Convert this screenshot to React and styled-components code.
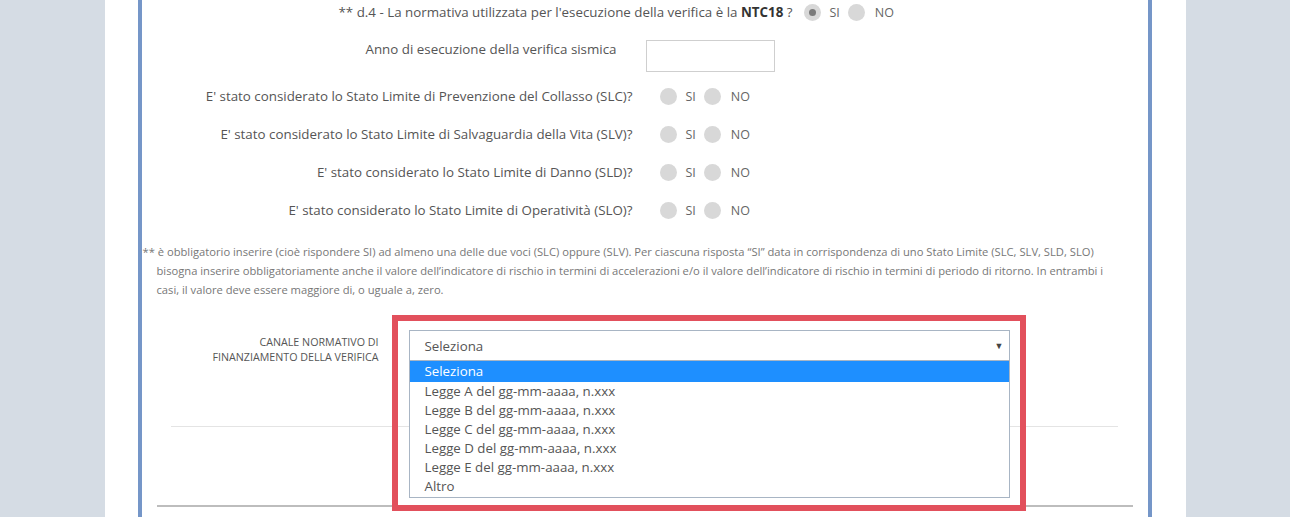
import React from "react";
import styled, { createGlobalStyle } from "styled-components";

const GlobalStyle = createGlobalStyle`
  html, body { margin: 0; padding: 0; }
  body {
    background: #d5dce4;
    font-family: "Open Sans", "Noto Sans", sans-serif;
    color: #555;
  }
`;

const Column = styled.div`
  width: 1081px;
  margin: 0 auto;
  background: #fff;
  padding: 0 34px 0 33px;
  box-sizing: border-box;
  height: 517px;
  overflow: hidden;
`;

const Panel = styled.section`
  border-left: 4px solid #7596c8;
  border-right: 4px solid #7596c8;
  height: 100%;
`;

const Row = styled.div`
  display: grid;
  grid-template-columns: ${(p) => p.$label}px 1fr;
  column-gap: ${(p) => p.$gap}px;
  align-items: ${(p) => p.$align || "center"};
  height: ${(p) => p.$h}px;
  margin-top: ${(p) => p.$mt || 0}px;
`;

const Label = styled.div`
  text-align: right;
  font-size: 13.35px;
  line-height: 18px;
  color: #555;
  white-space: nowrap;

  b {
    font-weight: 700;
    color: #333;
  }
`;

const SmallLabel = styled.div`
  text-align: right;
  font-size: 10.7px;
  line-height: 15px;
  padding-top: 5px;
  text-transform: uppercase;
  color: #555;
`;

const RadioGroup = styled.div`
  display: flex;
  align-items: center;
`;

const Radio = styled.span`
  position: relative;
  width: 17px;
  height: 17px;
  border-radius: 50%;
  background: #d8d8d8;
  flex: none;

  &::after {
    content: "";
    display: ${(p) => (p.$checked ? "block" : "none")};
    position: absolute;
    left: 5px;
    top: 5px;
    width: 7px;
    height: 7px;
    border-radius: 50%;
    background: #7a7a7a;
  }
`;

const Choice = styled.span`
  font-size: 12.5px;
  color: #666;
  margin: 0 ${(p) => p.$after}px 0 ${(p) => p.$before}px;
`;

const TextInput = styled.input`
  width: 129px;
  height: 32px;
  box-sizing: border-box;
  border: 1px solid #cfcfcf;
  background: #fff;
  margin: 0;
`;

const Note = styled.p`
  margin: 13px 0 0;
  padding: 0 26px 0 15px;
  text-indent: -14px;
  font-size: 11.2px;
  line-height: 19px;
  color: #777;
`;

const Field = styled.div`
  position: relative;
  width: 601px;
`;

const Select = styled.div`
  height: 31px;
  box-sizing: border-box;
  border: 1px solid #a8b5c4;
  display: flex;
  align-items: center;
  justify-content: space-between;
  padding: 0 5px 0 15px;
  font-size: 13.3px;
  color: #555;
  background: #fff;
`;

const Caret = styled.span`
  font-size: 9px;
  color: #444;
`;

const Options = styled.ul`
  position: absolute;
  top: 100%;
  left: 0;
  right: 0;
  margin: 0;
  padding: 0 0 1px;
  list-style: none;
  border: 1px solid #a8b5c4;
  border-top: none;
  background: #fff;
  z-index: 2;
`;

const Option = styled.li`
  height: ${(p) => (p.$active ? 21 : 19)}px;
  line-height: ${(p) => (p.$active ? 21 : 19)}px;
  padding-left: 15px;
  font-size: 13.3px;
  color: ${(p) => (p.$active ? "#fff" : "#555")};
  background: ${(p) => (p.$active ? "#1e8fff" : "transparent")};
`;

const Highlight = styled.div`
  position: absolute;
  top: -15px;
  left: -17px;
  width: 634px;
  height: 196px;
  box-sizing: border-box;
  border: 6px solid #e2505c;
  pointer-events: none;
  z-index: 3;
`;

const Rule = styled.hr`
  border: none;
  border-top: ${(p) => p.$weight}px solid ${(p) => p.$color};
  margin: ${(p) => p.$mt}px ${(p) => p.$right}px 0 ${(p) => p.$left}px;
`;

const YesNo = ({ checked }) => (
  <RadioGroup>
    <Radio $checked={checked === "si"} />
    <Choice $before={9} $after={8}>SI</Choice>
    <Radio $checked={checked === "no"} />
    <Choice $before={10} $after={0}>NO</Choice>
  </RadioGroup>
);

const limits = [
  "E' stato considerato lo Stato Limite di Prevenzione del Collasso (SLC)?",
  "E' stato considerato lo Stato Limite di Salvaguardia della Vita (SLV)?",
  "E' stato considerato lo Stato Limite di Danno (SLD)?",
  "E' stato considerato lo Stato Limite di Operatività (SLO)?",
];

const options = [
  "Seleziona",
  "Legge A del gg-mm-aaaa, n.xxx",
  "Legge B del gg-mm-aaaa, n.xxx",
  "Legge C del gg-mm-aaaa, n.xxx",
  "Legge D del gg-mm-aaaa, n.xxx",
  "Legge E del gg-mm-aaaa, n.xxx",
  "Altro",
];

export default function App() {
  return (
    <>
      <GlobalStyle />
      <Column>
        <Panel>
          <Row $label={651} $gap={11} $h={24}>
            <Label>
              ** d.4 - La normativa utilizzata per l'esecuzione della verifica è la <b>NTC18</b> ?
            </Label>
            <YesNo checked="si" />
          </Row>

          <Row $label={475} $gap={29} $h={32} $mt={16} $align="start">
            <Label>Anno di esecuzione della verifica sismica</Label>
            <TextInput type="text" />
          </Row>

          {limits.map((text, i) => (
            <Row key={text} $label={491} $gap={27} $h={38} $mt={i === 0 ? 5 : 0}>
              <Label>{text}</Label>
              <YesNo />
            </Row>
          ))}

          <Note>
            ** è obbligatorio inserire (cioè rispondere SI) ad almeno una delle due voci (SLC) oppure (SLV). Per ciascuna risposta “SI” data in corrispondenza di uno Stato Limite (SLC, SLV, SLD, SLO) bisogna inserire obbligatoriamente anche il valore dell’indicatore di rischio in termini di accelerazioni e/o il valore dell’indicatore di rischio in termini di periodo di ritorno. In entrambi i casi, il valore deve essere maggiore di, o uguale a, zero.
          </Note>

          <Row $label={237} $gap={30} $h={31} $mt={31} $align="start">
            <SmallLabel>
              Canale normativo di
              <br />
              finanziamento della verifica
            </SmallLabel>
            <Field>
              <Select>
                <span>Seleziona</span>
                <Caret>▼</Caret>
              </Select>
              <Options>
                {options.map((o, i) => (
                  <Option key={o} $active={i === 0}>
                    {o}
                  </Option>
                ))}
              </Options>
              <Highlight />
            </Field>
          </Row>

          <Rule $weight={1} $color="#e4e4e4" $mt={65} $left={29} $right={30} />
          <Rule $weight={2} $color="#bdbdbd" $mt={78} $left={15} $right={15} />
        </Panel>
      </Column>
    </>
  );
}
